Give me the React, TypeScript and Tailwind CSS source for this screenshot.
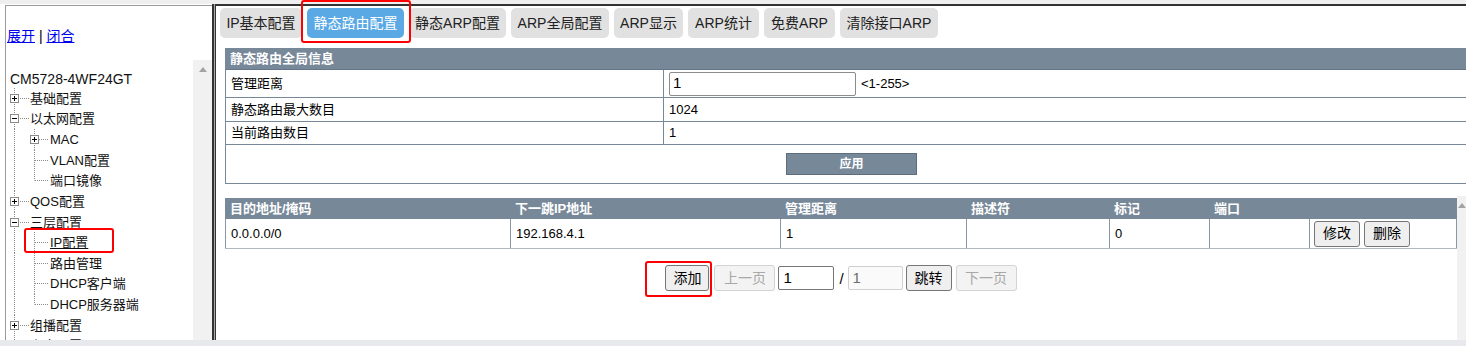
import React from "react";

type TreeRow = {
  label: string;
  level: 0 | 1;
  box?: "+" | "-";
  last?: boolean;
  link?: boolean;
};

const rows: TreeRow[] = [
  { label: "基础配置", level: 0, box: "+" },
  { label: "以太网配置", level: 0, box: "-" },
  { label: "MAC", level: 1, box: "+" },
  { label: "VLAN配置", level: 1 },
  { label: "端口镜像", level: 1, last: true },
  { label: "QOS配置", level: 0, box: "+" },
  { label: "三层配置", level: 0, box: "-" },
  { label: "IP配置", level: 1, link: true },
  { label: "路由管理", level: 1 },
  { label: "DHCP客户端", level: 1 },
  { label: "DHCP服务器端", level: 1, last: true },
  { label: "组播配置", level: 0, box: "+" },
  { label: "安全配置", level: 0, box: "+" },
];

function Guide({ r }: { r: TreeRow }) {
  const w = r.level === 0 ? 24 : 44;
  const bx = r.level === 0 ? 8.5 : 28.5;
  const dot = { stroke: "#8a8a8a", strokeDasharray: "1 1", strokeWidth: 1 };
  return (
    <svg width={w} height={21} className="block shrink-0 overflow-visible">
      <line x1={8.5} y1={0} x2={8.5} y2={21} {...dot} />
      {r.level === 0 && <line x1={12} y1={10.5} x2={23} y2={10.5} {...dot} />}
      {r.level === 1 && (
        <line x1={28.5} y1={0} x2={28.5} y2={r.last ? 10.5 : 21} {...dot} />
      )}
      {r.level === 1 && <line x1={29} y1={10.5} x2={43} y2={10.5} {...dot} />}
      {r.box && (
        <g>
          <rect x={bx - 4} y={6.5} width={8} height={8} fill="#fff" stroke="#8a8a8a" />
          <line x1={bx - 2.5} y1={10.5} x2={bx + 2.5} y2={10.5} stroke="#000" />
          {r.box === "+" && (
            <line x1={bx} y1={8} x2={bx} y2={13} stroke="#000" />
          )}
        </g>
      )}
    </svg>
  );
}

function UpArrow() {
  return (
    <svg width="8" height="5" className="block">
      <polygon points="0,5 4,0 8,5" fill="#a3a3a3" />
    </svg>
  );
}

const tabs = [
  { t: "IP基本配置", w: "w-[82px]" },
  { t: "静态路由配置", w: "w-[97px]", active: true },
  { t: "静态ARP配置", w: "w-[97px]" },
  { t: "ARP全局配置", w: "w-[98px]" },
  { t: "ARP显示", w: "w-[69px]" },
  { t: "ARP统计", w: "w-[71px]" },
  { t: "免费ARP", w: "w-[71px]" },
  { t: "清除接口ARP", w: "w-[98px]" },
];

const btn =
  "h-[26px] flex items-center justify-center border border-[#767676] bg-[#efefef] rounded-[3px] text-[14px] text-black";
const btnDis =
  "h-[26px] flex items-center justify-center border border-[#d3d3d3] bg-[#f3f3f3] rounded-[3px] text-[14px] text-[#a8a8a8]";

export default function App() {
  return (
    <div className="relative w-[1466px] h-[346px] overflow-hidden bg-white font-['Liberation_Sans','Noto_Sans_CJK_SC',sans-serif] text-black">
      <div className="h-[4px] bg-[#efefef]" />
      <div className="flex h-[336px] overflow-hidden">
        {/* left frame */}
        <div className="ml-[5px] w-[207px] h-[335px] mt-[1px] border-l border-t border-[#9a9a9a] flex flex-col overflow-hidden">
          <div className="h-[54px] pt-[22px] pl-[1px] text-[14px] leading-[16px] shrink-0">
            <span className="text-[#0000ee] underline">展开</span>
            <span className="text-black"> | </span>
            <span className="text-[#0000ee] underline">闭合</span>
          </div>
          <div className="flex flex-1 min-h-0">
            <div className="flex-1 overflow-hidden pt-[10px]">
              <div className="h-[18px] pl-[4px] text-[14px] leading-[18px] text-[#111]">
                CM5728-4WF24GT
              </div>
              {rows.map((r, i) => (
                <div key={i} className="h-[20.64px] flex items-center overflow-visible">
                  <Guide r={r} />
                  <span
                    className={
                      "text-[13px] leading-none whitespace-nowrap text-[#111] " +
                      (r.link ? "underline" : "")
                    }
                  >
                    {r.label}
                  </span>
                </div>
              ))}
            </div>
            <div className="w-[19px] bg-[#f1f1f1] flex flex-col items-center pt-[7px] shrink-0">
              <UpArrow />
            </div>
          </div>
        </div>
        {/* frame divider */}
        <div className="w-[4px] h-full flex shrink-0">
          <div className="w-[2px] bg-[#333]" />
          <div className="w-[1px] bg-[#a8a8a8]" />
          <div className="w-[1px] bg-[#333]" />
        </div>
        {/* right frame */}
        <div className="flex-1 h-full border-t-2 border-[#333] flex flex-col min-w-0">
          <div className="mt-[2px] pl-[4px] flex gap-[5px] h-[30px] shrink-0">
            {tabs.map((t) => (
              <div
                key={t.t}
                className={
                  t.w +
                  " h-[30px] rounded-[5px] flex items-center justify-center text-[14px] whitespace-nowrap " +
                  (t.active ? "bg-[#5aa9e4] text-white" : "bg-[#e1e1e1] text-[#222]")
                }
              >
                {t.t}
              </div>
            ))}
          </div>

          {/* table 1 */}
          <div className="mt-[10px] ml-[9px] border-l border-[#778899] shrink-0">
            <div className="h-[22px] bg-[#778899] border-b border-[#65768a] flex items-center pl-[4px] text-white font-bold text-[13px]">
              静态路由全局信息
            </div>
            <div className="h-[28px] border-b border-[#778899] flex text-[13px]">
              <div className="w-[437px] flex items-center pl-[5px]">管理距离</div>
              <div className="flex-1 border-l border-[#778899] flex items-center pl-[5px]">
                <div className="w-[187px] h-[24px] border border-[#8c8c8c] rounded-[2px] flex items-center pl-[3px] text-[15px]">
                  1
                </div>
                <span className="ml-[5px]">&lt;1-255&gt;</span>
              </div>
            </div>
            <div className="h-[24px] border-b border-[#778899] flex text-[13px]">
              <div className="w-[437px] flex items-center pl-[5px]">静态路由最大数目</div>
              <div className="flex-1 border-l border-[#778899] flex items-center pl-[5px]">1024</div>
            </div>
            <div className="h-[23px] border-b border-[#778899] flex text-[13px]">
              <div className="w-[437px] flex items-center pl-[5px]">当前路由数目</div>
              <div className="flex-1 border-l border-[#778899] flex items-center pl-[5px]">1</div>
            </div>
            <div className="h-[39px] border-b border-[#778899] pt-[8px] pl-[560px]">
              <div className="w-[131px] h-[22px] bg-[#778899] border border-[#5d6d7e] flex items-center justify-center text-white font-bold text-[12px]">
                应用
              </div>
            </div>
          </div>

          {/* lower area */}
          <div className="mt-[12px] ml-[9px] flex flex-1 min-h-0">
            <div className="w-[1232px] shrink-0 pt-[2px]">
              <div className="flex h-[21px] bg-[#778899] text-white font-bold text-[13px]">
                {[
                  ["w-[285px]", "目的地址/掩码"],
                  ["w-[270px]", "下一跳IP地址"],
                  ["w-[186px]", "管理距离"],
                  ["w-[143px]", "描述符"],
                  ["w-[100px]", "标记"],
                  ["w-[100px]", "端口"],
                  ["w-[148px]", ""],
                ].map(([w, t], i) => (
                  <div key={i} className={w + " border-l border-[#778899] flex items-center pl-[4px] whitespace-nowrap"}>
                    {t}
                  </div>
                ))}
              </div>
              <div className="flex h-[30px] border-b border-[#b0b8c0] text-[13px]">
                {[
                  ["w-[285px]", "0.0.0.0/0"],
                  ["w-[270px]", "192.168.4.1"],
                  ["w-[186px]", "1"],
                  ["w-[143px]", ""],
                  ["w-[100px]", "0"],
                  ["w-[100px]", ""],
                ].map(([w, t], i) => (
                  <div key={i} className={w + " border-l border-[#8b97a4] flex items-center pl-[5px]"}>
                    {t}
                  </div>
                ))}
                <div className="w-[148px] border-l border-r border-[#8b97a4] flex items-center pl-[4px] gap-[4px]">
                  <div className={btn + " w-[46px] h-[25px]"}>修改</div>
                  <div className={btn + " w-[46px] h-[25px]"}>删除</div>
                </div>
              </div>
              <div className="mt-[16px] flex justify-center items-center">
                <div className={btn + " w-[44px]"}>添加</div>
                <div className={btnDis + " w-[61px] ml-[5px]"}>上一页</div>
                <div className="ml-[3px] w-[56px] h-[24px] border border-[#767676] rounded-[2px] flex items-center pl-[4px] text-[15px]">
                  1
                </div>
                <span className="ml-[5px] text-[15px] leading-none">/</span>
                <div className="ml-[4px] w-[55px] h-[24px] border border-[#d0d0d0] bg-[#fafafa] rounded-[2px] flex items-center pl-[4px] text-[15px] text-[#6d6d6d]">
                  1
                </div>
                <div className={btn + " w-[46px] ml-[3px]"}>跳转</div>
                <div className={btnDis + " w-[61px] ml-[4px]"}>下一页</div>
              </div>
            </div>
            <div className="flex-1 bg-[#f1f1f1] flex flex-col items-center pt-[7px]">
              <UpArrow />
            </div>
          </div>
        </div>
      </div>
      <div className="h-[6px] bg-[#e7e9ec]" />

      {/* annotation boxes */}
      <div className="absolute left-[301px] top-0 w-[110px] h-[43px] border-2 border-[#ff0000] rounded-[3px]" />
      <div className="absolute left-[24px] top-[228px] w-[90px] h-[25px] border-2 border-[#ff0000] rounded-[3px]" />
      <div className="absolute left-[645px] top-[261px] w-[67px] h-[36px] border-2 border-[#ff0000] rounded-[3px]" />
    </div>
  );
}
